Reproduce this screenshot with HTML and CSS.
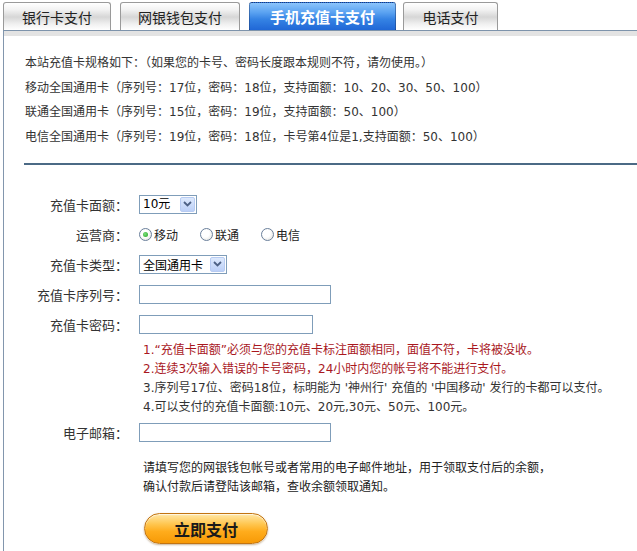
FILE: index.html
```html
<!DOCTYPE html>
<html>
  <head>
    <meta charset="utf-8" />
    <title>手机充值卡支付</title>
    <link rel="stylesheet" href="styles.css">
  </head>
  <body>
    <!-- 支付方式标签 -->
    <div class="tabs">
      <a class="tab tab-bank">银行卡支付</a>
      <a class="tab tab-wallet">网银钱包支付</a>
      <a class="tab tab-card active">手机充值卡支付</a>
      <a class="tab tab-phone">电话支付</a>
    </div>

    <div class="panel">
      <!-- 规格说明 -->
      <div class="rules">
        <p>本站充值卡规格如下：（如果您的卡号、密码长度跟本规则不符，请勿使用。）</p>
        <p>移动全国通用卡（序列号：17位，密码：18位，支持面额：10、20、30、50、100）</p>
        <p>联通全国通用卡（序列号：15位，密码：19位，支持面额：50、100）</p>
        <p>电信全国通用卡（序列号：19位，密码：18位，卡号第4位是1,支持面额：50、100）</p>
      </div>
      <div class="divider"></div>

      <!-- 表单 -->
      <form class="pay-form" action="" method="">
        <div class="row">
          <label class="lbl">充值卡面额：</label>
          <div class="sel sel-amount">
            <select>
              <option>10元</option>
              <option>20元</option>
              <option>30元</option>
              <option>50元</option>
              <option>100元</option>
            </select>
            <span class="sel-btn">
              <svg width="9" height="6" viewBox="0 0 9 6"><path d="M1 1 L4.5 4.5 L8 1" fill="none" stroke="#4d6185" stroke-width="1.8"/></svg>
            </span>
          </div>
        </div>
        <div class="row">
          <label class="lbl">运营商：</label>
          <div class="radios">
            <label class="radio"><input type="radio" name="op" checked />移动</label>
            <label class="radio"><input type="radio" name="op" />联通</label>
            <label class="radio"><input type="radio" name="op" />电信</label>
          </div>
        </div>
        <div class="row">
          <label class="lbl">充值卡类型：</label>
          <div class="sel sel-type">
            <select>
              <option>全国通用卡</option>
            </select>
            <span class="sel-btn">
              <svg width="9" height="6" viewBox="0 0 9 6"><path d="M1 1 L4.5 4.5 L8 1" fill="none" stroke="#4d6185" stroke-width="1.8"/></svg>
            </span>
          </div>
        </div>
        <div class="row">
          <label class="lbl">充值卡序列号：</label>
          <input type="text" class="txt txt-long" />
        </div>
        <div class="row">
          <label class="lbl">充值卡密码：</label>
          <input type="text" class="txt txt-short" />
        </div>

        <div class="notes">
          <p class="warn">1.“充值卡面额”必须与您的充值卡标注面额相同，面值不符，卡将被没收。</p>
          <p class="warn">2.连续3次输入错误的卡号密码，24小时内您的帐号将不能进行支付。</p>
          <p>3.序列号17位、密码18位，标明能为 '神州行' 充值的 '中国移动' 发行的卡都可以支付。</p>
          <p>4.可以支付的充值卡面额:10元、20元,30元、50元、100元。</p>
        </div>

        <div class="row">
          <label class="lbl">电子邮箱：</label>
          <input type="text" class="txt txt-long" />
        </div>

        <div class="help">
          <p>请填写您的网银钱包帐号或者常用的电子邮件地址，用于领取支付后的余额，</p>
          <p>确认付款后请登陆该邮箱，查收余额领取通知。</p>
        </div>

        <div class="submit">
          <input type="button" id="btPay" value="立即支付" />
        </div>
      </form>
    </div>
  </body>
</html>
```

FILE: styles.css
```css
body {
  margin: 0;
  padding: 0;
  background-color: #ffffff;
  font-family: "DejaVu Sans", "Noto Sans CJK SC", sans-serif;
  font-size: 12px;
  color: #333;
}
p {
  margin: 0;
}

/* 标签 */
.tabs {
  display: flex;
  align-items: flex-end;
  padding: 2px 0 0 3px;
  height: 28px;
}
.tab {
  box-sizing: border-box;
  height: 28px;
  margin-right: 9px;
  border: 1px solid #9a9a9a;
  border-bottom: none;
  border-radius: 3px 3px 0 0;
  display: flex;
  justify-content: center;
  align-items: center;
  font-family: "Noto Sans CJK SC", sans-serif;
  font-size: 14px;
  color: #222;
  background: linear-gradient(#ffffff 0%, #f2f2f2 25%, #d6d6d6 52%, #f0f0f0 78%, #ffffff 100%);
  cursor: pointer;
}
.tab-bank { width: 108px; }
.tab-wallet { width: 120px; }
.tab-card { width: 147px; margin-right: 7px; }
.tab-phone { width: 95px; }
.tab.active {
  border: 1px dotted #1c3f78;
  border-bottom: none;
  color: #ffffff;
  font-weight: bold;
  font-size: 15px;
  background: linear-gradient(#8cc4fb 0%, #5aa2f1 35%, #3583e4 60%, #2067d6 100%);
}

/* 主面板 */
.panel {
  margin-left: 3px;
  border-left: 1px solid #8296ad;
  border-top: 1px solid #7d93ab;
  min-height: 520px;
}
.panel::before {
  content: "";
  display: block;
  height: 5px;
  background-color: #e3e3e3;
}
.rules {
  padding: 15px 0 0 21px;
  line-height: 24.5px;
  color: #333;
}
.divider {
  margin: 14px 0 0 20px;
  height: 2px;
  background-color: #4b6a85;
}

/* 表单 */
.pay-form {
  padding-top: 24px;
}
.row {
  display: flex;
  align-items: center;
  height: 30px;
}
.lbl {
  width: 124px;
  text-align: right;
  font-family: "Noto Sans CJK SC", sans-serif;
  font-size: 13px;
  color: #333;
  margin-right: 11px;
}
.sel {
  position: relative;
  box-sizing: border-box;
  border: 1px solid #7f9db9;
  height: 19px;
  background: #fff;
}
.sel select {
  appearance: none;
  -webkit-appearance: none;
  border: none;
  outline: none;
  background: transparent;
  height: 17px;
  width: 100%;
  padding: 0 0 0 3px;
  font-family: "DejaVu Sans", "Noto Sans CJK SC", sans-serif;
  font-size: 12px;
  color: #000;
}
.sel-amount { width: 58px; }
.sel-type { width: 88px; }
.sel-type select {
  font-family: "Noto Sans CJK SC", sans-serif;
  font-size: 12px;
}
.sel-btn {
  position: absolute;
  right: 1px;
  top: 1px;
  width: 15px;
  height: 15px;
  box-sizing: border-box;
  border: 1px solid #b7cbf2;
  border-radius: 2px;
  background: linear-gradient(#dde9fd, #bcd0f7);
  display: flex;
  justify-content: center;
  align-items: center;
  pointer-events: none;
}
.radios {
  display: flex;
  font-family: "Noto Sans CJK SC", sans-serif;
  font-size: 12px;
  color: #222;
}
.radio {
  display: flex;
  align-items: center;
  margin-right: 22px;
}
.radio input {
  appearance: none;
  -webkit-appearance: none;
  width: 13px;
  height: 13px;
  margin: 0 2px 0 0;
  border: 1px solid #6a7f9b;
  border-radius: 50%;
  background: radial-gradient(circle at 40% 40%, #ffffff 40%, #dcdcd6 100%);
  box-sizing: border-box;
  position: relative;
}
.radio input:checked::after {
  content: "";
  position: absolute;
  left: 3px;
  top: 3px;
  width: 5px;
  height: 5px;
  border-radius: 50%;
  background: radial-gradient(circle at 40% 40%, #7ce07c, #21a121);
}
.txt {
  box-sizing: border-box;
  height: 19px;
  border: 1px solid #7f9db9;
  padding: 0 3px;
  outline: none;
}
.txt-long { width: 192px; }
.txt-short { width: 174px; }

.notes {
  margin: 2px 0 0 139px;
  line-height: 19px;
  font-size: 12px;
  color: #333;
}
.notes .warn {
  color: #a9181e;
}
.help {
  margin: 10px 0 0 139px;
  line-height: 19px;
  color: #222;
  font-family: "Noto Sans CJK SC", sans-serif;
}
.submit {
  margin: 18px 0 0 140px;
}
#btPay {
  width: 124px;
  height: 31px;
  border: 1px solid #c27411;
  border-radius: 16px;
  background: linear-gradient(#ffe7a6 0%, #ffc64f 35%, #ffac1c 60%, #f79a06 100%);
  box-shadow: 0 1px 2px rgba(120, 70, 0, 0.4), inset 0 1px 1px rgba(255, 255, 255, 0.7);
  font-family: "Noto Sans CJK SC", sans-serif;
  font-size: 16px;
  font-weight: bold;
  color: #1a1a1a;
  cursor: pointer;
}
```
